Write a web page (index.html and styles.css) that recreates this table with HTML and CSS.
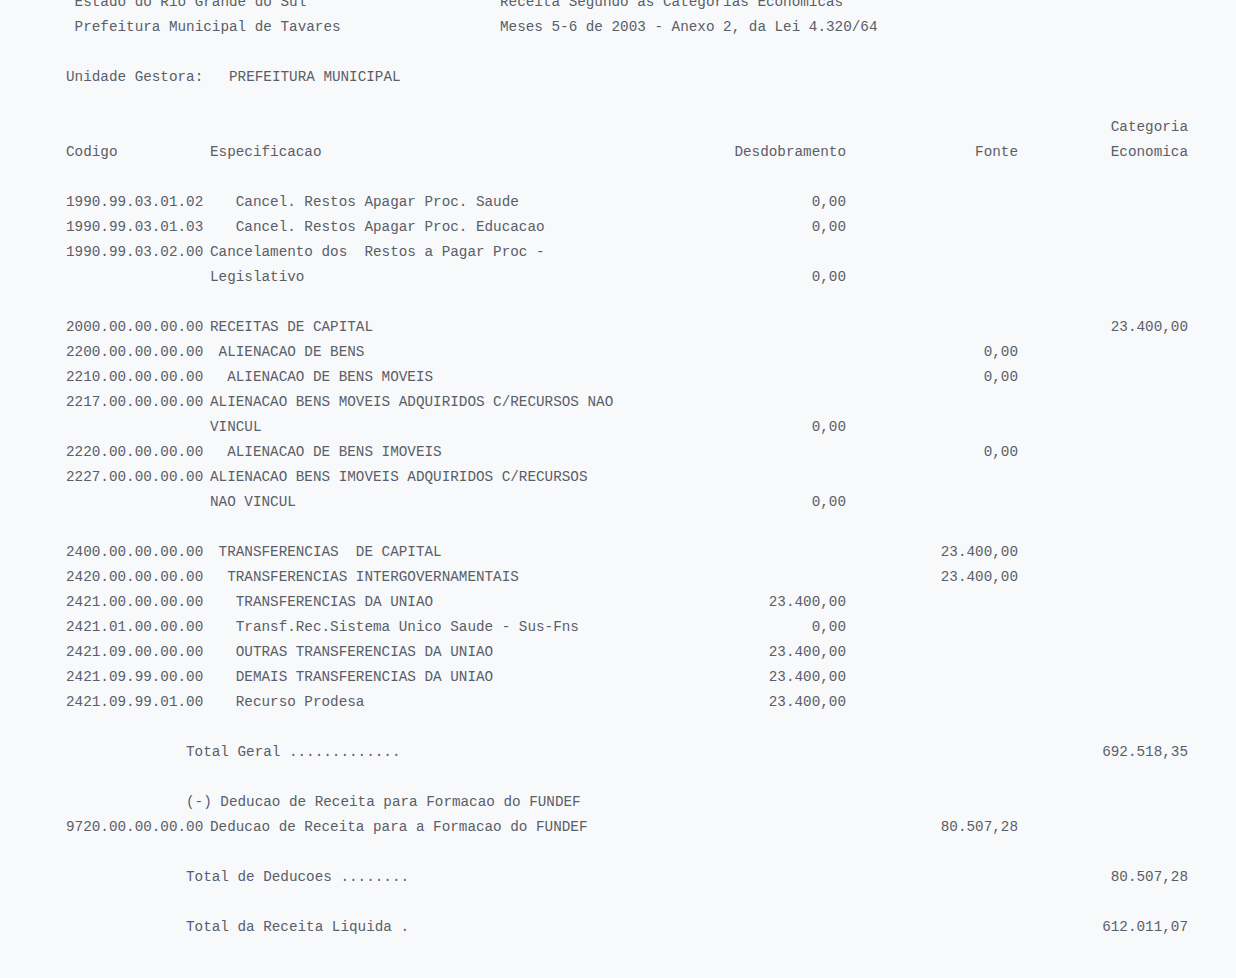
FILE: index.html
```html
<!DOCTYPE html>
<html lang="pt">
<head>
    <meta charset="UTF-8">
    <title>Receita Segundo as Categorias Economicas</title>
    <link rel="stylesheet" href="styles.css">
</head>
<body>
<div class="sheet">
    <header class="top">
        <div class="org">
            <p>Estado do Rio Grande do Sul</p>
            <p>Prefeitura Municipal de Tavares</p>
        </div>
        <div class="title">
            <p>Receita Segundo as Categorias Economicas</p>
            <p>Meses 5-6 de 2003 - Anexo 2, da Lei 4.320/64</p>
        </div>
    </header>

    <p class="unit">Unidade Gestora:   PREFEITURA MUNICIPAL</p>

    <div class="row head">
        <span class="code">Codigo</span>
        <span class="spec">Especificacao</span>
        <span class="num">Desdobramento</span>
        <span class="num">Fonte</span>
        <span class="num">Categoria<br>Economica</span>
    </div>

    <div class="gap"></div>

    <div class="row">
        <span class="code">1990.99.03.01.02</span>
        <span class="spec i3">Cancel. Restos Apagar Proc. Saude</span>
        <span class="num">0,00</span>
    </div>
    <div class="row">
        <span class="code">1990.99.03.01.03</span>
        <span class="spec i3">Cancel. Restos Apagar Proc. Educacao</span>
        <span class="num">0,00</span>
    </div>
    <div class="row">
        <span class="code">1990.99.03.02.00</span>
        <span class="spec">Cancelamento dos  Restos a Pagar Proc -<br>Legislativo</span>
        <span class="num">0,00</span>
    </div>

    <div class="gap"></div>

    <div class="row">
        <span class="code">2000.00.00.00.00</span>
        <span class="spec">RECEITAS DE CAPITAL</span>
        <span></span>
        <span></span>
        <span class="num">23.400,00</span>
    </div>
    <div class="row">
        <span class="code">2200.00.00.00.00</span>
        <span class="spec i1">ALIENACAO DE BENS</span>
        <span></span>
        <span class="num">0,00</span>
    </div>
    <div class="row">
        <span class="code">2210.00.00.00.00</span>
        <span class="spec i2">ALIENACAO DE BENS MOVEIS</span>
        <span></span>
        <span class="num">0,00</span>
    </div>
    <div class="row">
        <span class="code">2217.00.00.00.00</span>
        <span class="spec">ALIENACAO BENS MOVEIS ADQUIRIDOS C/RECURSOS NAO<br>VINCUL</span>
        <span class="num">0,00</span>
    </div>
    <div class="row">
        <span class="code">2220.00.00.00.00</span>
        <span class="spec i2">ALIENACAO DE BENS IMOVEIS</span>
        <span></span>
        <span class="num">0,00</span>
    </div>
    <div class="row">
        <span class="code">2227.00.00.00.00</span>
        <span class="spec">ALIENACAO BENS IMOVEIS ADQUIRIDOS C/RECURSOS<br>NAO VINCUL</span>
        <span class="num">0,00</span>
    </div>

    <div class="gap"></div>

    <div class="row">
        <span class="code">2400.00.00.00.00</span>
        <span class="spec i1">TRANSFERENCIAS  DE CAPITAL</span>
        <span></span>
        <span class="num">23.400,00</span>
    </div>
    <div class="row">
        <span class="code">2420.00.00.00.00</span>
        <span class="spec i2">TRANSFERENCIAS INTERGOVERNAMENTAIS</span>
        <span></span>
        <span class="num">23.400,00</span>
    </div>
    <div class="row">
        <span class="code">2421.00.00.00.00</span>
        <span class="spec i3">TRANSFERENCIAS DA UNIAO</span>
        <span class="num">23.400,00</span>
    </div>
    <div class="row">
        <span class="code">2421.01.00.00.00</span>
        <span class="spec i3">Transf.Rec.Sistema Unico Saude - Sus-Fns</span>
        <span class="num">0,00</span>
    </div>
    <div class="row">
        <span class="code">2421.09.00.00.00</span>
        <span class="spec i3">OUTRAS TRANSFERENCIAS DA UNIAO</span>
        <span class="num">23.400,00</span>
    </div>
    <div class="row">
        <span class="code">2421.09.99.00.00</span>
        <span class="spec i3">DEMAIS TRANSFERENCIAS DA UNIAO</span>
        <span class="num">23.400,00</span>
    </div>
    <div class="row">
        <span class="code">2421.09.99.01.00</span>
        <span class="spec i3">Recurso Prodesa</span>
        <span class="num">23.400,00</span>
    </div>

    <div class="gap"></div>

    <div class="row total">
        <span class="label">Total Geral .............</span>
        <span class="num">692.518,35</span>
    </div>

    <div class="gap"></div>

    <div class="row total">
        <span class="label">(-) Deducao de Receita para Formacao do FUNDEF</span>
    </div>
    <div class="row">
        <span class="code">9720.00.00.00.00</span>
        <span class="spec">Deducao de Receita para a Formacao do FUNDEF</span>
        <span></span>
        <span class="num">80.507,28</span>
    </div>

    <div class="gap"></div>

    <div class="row total">
        <span class="label">Total de Deducoes ........</span>
        <span class="num">80.507,28</span>
    </div>

    <div class="gap"></div>

    <div class="row total">
        <span class="label">Total da Receita Liquida .</span>
        <span class="num">612.011,07</span>
    </div>
</div>
</body>
</html>
```

FILE: styles.css
```css
body {
    margin: 0;
    background: #f8f9fb;
    color: #5a5e68;
    font-family: "Liberation Mono", "Courier New", monospace;
    font-size: 14.3px;
    line-height: 25px;
}

p {
    margin: 0;
}

.sheet {
    margin-top: -10px;
    padding: 0 48px 0 66px;
}

/* cabecalho */
.top {
    display: grid;
    grid-template-columns: 434px 1fr;
}

.org {
    padding-left: 1ch;
}

.unit {
    margin: 25px 0;
    white-space: pre;
}

/* linhas do relatorio */
.row {
    display: grid;
    grid-template-columns: 144px 516px 120px 172px 170px;
    white-space: pre;
}

.head {
    margin-top: 25px;
}

.head .code,
.head .spec {
    align-self: end;
}

.num {
    text-align: right;
    align-self: end;
}

.i1 {
    padding-left: 1ch;
}

.i2 {
    padding-left: 2ch;
}

.i3 {
    padding-left: 3ch;
}

.total .label {
    grid-column: 1 / 5;
    padding-left: 120px;
}

.total .num {
    grid-column: 5;
}

.gap {
    height: 25px;
}
```
